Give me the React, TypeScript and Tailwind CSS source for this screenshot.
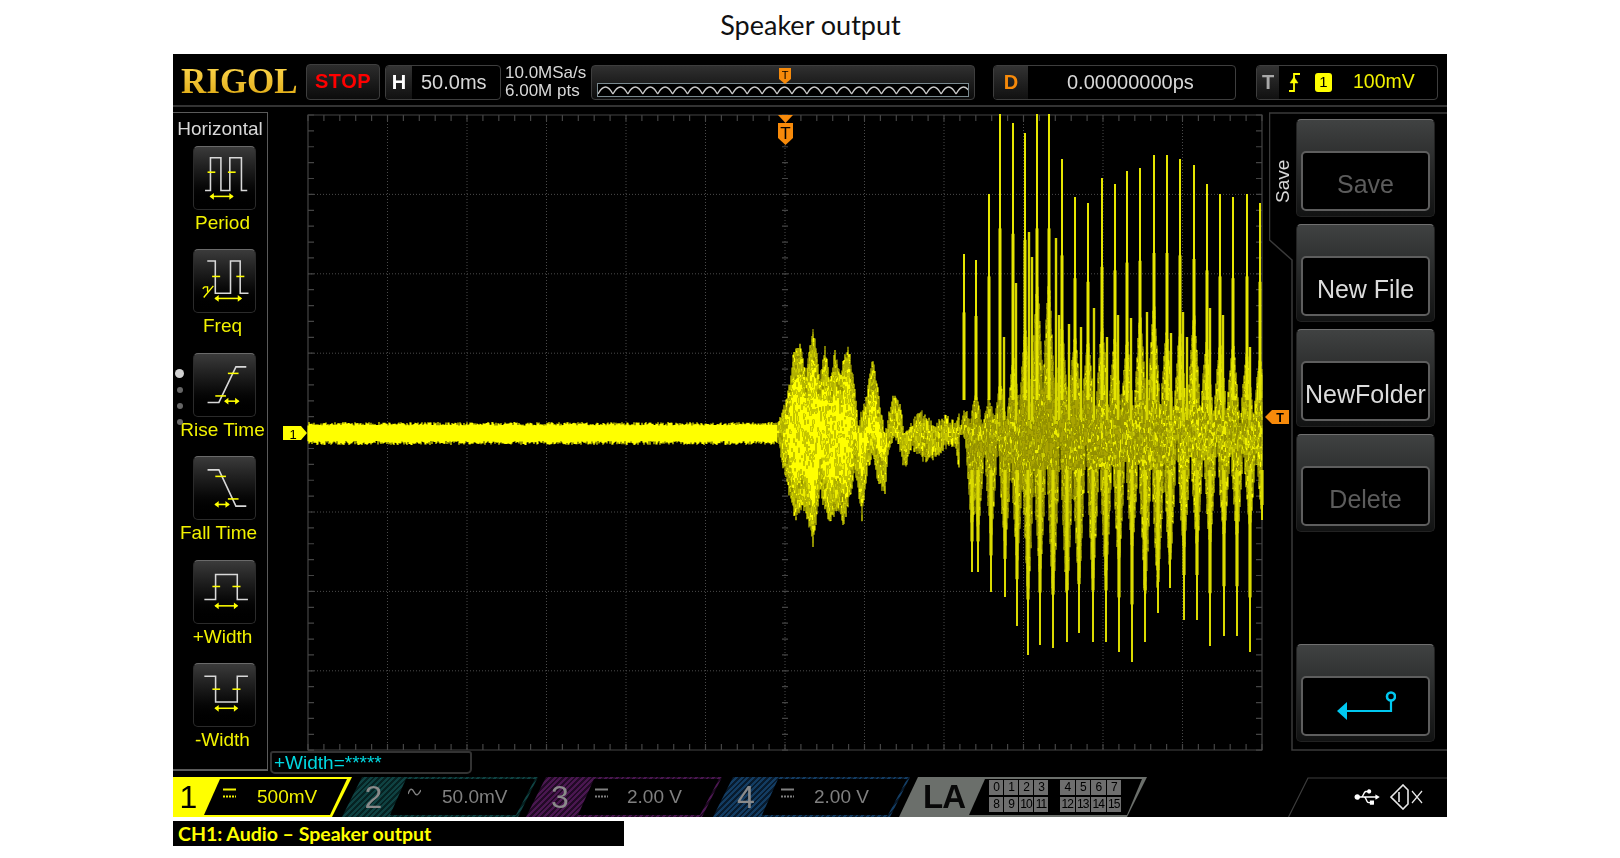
import React, { useMemo } from "react";
import { FaUsb } from "react-icons/fa";

type Pt = [number, number];

const rng = (seed: number) => () => {
  seed = (seed + 0x6d2b79f5) | 0;
  let t = Math.imul(seed ^ (seed >>> 15), 1 | seed);
  t = (t + Math.imul(t ^ (t >>> 7), 61 | t)) ^ t;
  return ((t ^ (t >>> 14)) >>> 0) / 4294967296;
};

const interp = (pts: Pt[], x: number) => {
  for (let i = 1; i < pts.length; i++) {
    if (x <= pts[i][0]) {
      const [x0, y0] = pts[i - 1];
      const [x1, y1] = pts[i];
      return y0 + ((y1 - y0) * (x - x0)) / (x1 - x0);
    }
  }
  return pts[pts.length - 1][1];
};

// envelopes read off the trace, in page pixels
const burstTop: Pt[] = [[778, 421], [785, 400], [790, 380], [793, 350], [800, 338], [806, 372], [813, 322], [820, 375], [825, 345], [830, 375], [835, 350], [840, 370], [848, 342], [855, 382], [858, 420], [865, 400], [873, 355], [880, 400], [885, 430], [893, 392], [900, 402], [905, 432], [912, 420], [920, 405], [927, 416], [935, 420], [945, 414], [955, 420], [960, 412]];
const burstBot: Pt[] = [[778, 445], [785, 480], [790, 500], [795, 522], [805, 510], [813, 548], [820, 495], [825, 512], [830, 525], [840, 510], [843, 530], [850, 500], [855, 475], [860, 505], [862, 523], [868, 470], [873, 460], [877, 480], [885, 500], [888, 460], [895, 440], [905, 472], [912, 450], [925, 465], [935, 460], [945, 450], [955, 448], [960, 478]];
const bodyTop: Pt[] = [[960, 420], [972, 385], [990, 395], [1005, 370], [1020, 335], [1035, 280], [1042, 250], [1050, 270], [1060, 315], [1075, 325], [1090, 330], [1105, 310], [1118, 335], [1130, 330], [1142, 300], [1155, 290], [1168, 325], [1180, 320], [1195, 300], [1210, 340], [1225, 330], [1235, 335], [1250, 345], [1263, 350]];
const bodyBot: Pt[] = [[960, 490], [970, 537], [990, 547], [1005, 560], [1020, 580], [1030, 617], [1040, 587], [1055, 613], [1070, 613], [1080, 600], [1095, 597], [1107, 593], [1120, 577], [1133, 560], [1146, 617], [1158, 607], [1170, 580], [1185, 563], [1197, 560], [1210, 557], [1224, 550], [1237, 550], [1250, 537], [1262, 520]];
const upSpikes: Pt[] = [[964, 254], [976, 260], [989, 194], [1000, 114], [1013, 123], [1025, 133], [1037, 114], [1049, 114], [1062, 159], [1075, 197], [1088, 203], [1102, 178], [1115, 184], [1127, 171], [1140, 168], [1154, 155], [1167, 155], [1180, 159], [1194, 165], [1207, 184], [1220, 194], [1233, 197], [1247, 194], [1260, 203]];
const upMinor: Pt[] = [[1004, 337], [1016, 283], [1029, 232], [1032, 257], [1056, 238], [1059, 315], [1069, 324], [1081, 327], [1094, 308], [1107, 337], [1118, 315], [1131, 318], [1147, 312], [1171, 333], [1183, 312], [1187, 337], [1210, 308], [1223, 315], [1250, 347]];
const downSpikes: Pt[] = [[972, 572], [978, 572], [991, 592], [1005, 597], [1017, 626], [1028, 655], [1040, 645], [1053, 648], [1067, 642], [1079, 633], [1093, 642], [1106, 642], [1119, 652], [1132, 662], [1145, 642], [1158, 613], [1170, 588], [1184, 620], [1197, 620], [1210, 646], [1224, 636], [1237, 636], [1250, 652], [1262, 520]];

const SHADES = ["#ffff00", "#eded00", "#cfcf00", "#a9a400"];

function buildTrace() {
  const r = rng(7);
  const d = ["", "", "", ""];
  const seg = (x: number, a: number, b: number, mix: number) => {
    let y = a;
    while (y < b) {
      const len = 2 + r() * 4;
      const v = r() + mix;
      const i = v < 0.45 ? 0 : v < 0.8 ? 1 : v < 1.1 ? 2 : 3;
      d[i] += `M${x} ${y.toFixed(1)}V${Math.min(b, y + len).toFixed(1)}`;
      y += len;
    }
  };

  // flat noise band before the trigger
  for (let x = 308; x < 778; x++) {
    d[0] += `M${x} ${(433 - 7.5 - r() * 3.5).toFixed(1)}V${(433 + 8 + r() * 4).toFixed(1)}`;
  }

  // first burst
  for (let x = 778; x < 960; x++) {
    const t = interp(burstTop, x) + r() * 9;
    const b = interp(burstBot, x) - r() * 9;
    seg(x, t, Math.min(433, t + 30), 0.18);
    seg(x, Math.min(433, t + 30), Math.max(433, b - 30), -0.3);
    seg(x, Math.max(433, b - 30), b, 0.18);
  }

  // second burst, lobes sit on the spikes
  const nearest = (list: Pt[], x: number) =>
    list.reduce((m, p) => Math.min(m, Math.abs(p[0] - x)), 99);
  for (let x = 960; x < 1263; x++) {
    const up = Math.max(0, 1 - nearest(upSpikes, x) / 6.6);
    const dn = Math.max(0, 1 - nearest(downSpikes, x) / 6.6);
    const cT = interp(bodyTop, x);
    const cB = interp(bodyBot, x);
    const t = 432 - (432 - cT) * (0.12 + 0.88 * up ** 0.8) + r() * 5;
    const b = 432 + (cB - 432) * (0.1 + 0.9 * dn ** 0.8) - r() * 5;
    const dark = 0.62 - Math.min(0.35, Math.abs(x - 1045) / 400);
    seg(x, t, b, dark);
  }
  return d;
}

const GRID_X = Array.from({ length: 13 }, (_, i) => 308 + i * 79.5);
const GRID_Y = Array.from({ length: 9 }, (_, i) => 115 + i * 79.4);
const TICKS_X = Array.from({ length: 61 }, (_, i) => 308 + i * 15.9);
const TICKS_Y = Array.from({ length: 41 }, (_, i) => 115 + i * 15.88);

function Scope() {
  const trace = useMemo(buildTrace, []);
  return (
    <svg
      viewBox="268 107 1001 644"
      className="block h-[644px] w-[1001px] overflow-visible"
    >
      <g stroke="#4a4a4a" strokeWidth="1" strokeDasharray="1 2">
        {GRID_X.slice(1, 12).map((x) => (
          <line key={x} x1={x} x2={x} y1={115} y2={750} />
        ))}
        {GRID_Y.slice(1, 8).map((y) => (
          <line key={y} x1={308} x2={1262} y1={y} y2={y} />
        ))}
      </g>
      <g stroke="#444" strokeWidth="1.2">
        <path d="M308 115H1262V750H308Z" fill="none" />
        {TICKS_X.map((x) => (
          <path key={x} d={`M${x} 115v6M${x} 750v-6M${x} 429v6`} />
        ))}
        {TICKS_Y.map((y) => (
          <path key={y} d={`M308 ${y}h6M1262 ${y}h-6M782 ${y}h6`} />
        ))}
      </g>

      <g className="blur-[0.4px]" fill="none" strokeWidth="1.15">
        {trace.map((d, i) => (
          <path key={i} d={d} stroke={SHADES[i]} />
        ))}
        {upSpikes.map(([x, y]) => (
          <g key={x} stroke="#e6e600">
            <line x1={x} x2={x} y1={y} y2={400} strokeWidth="2" />
            <line x1={x} x2={x} y1={y + (400 - y) * 0.4} y2={400} strokeWidth="3" />
          </g>
        ))}
        {upMinor.map(([x, y]) => (
          <line key={x} x1={x} x2={x} y1={y} y2={420} stroke="#d8d800" strokeWidth="2.4" />
        ))}
        {downSpikes.map(([x, y]) => (
          <g key={x} stroke="#dada00">
            <line x1={x} x2={x} y1={470} y2={y} strokeWidth="2" />
            <line x1={x} x2={x} y1={470} y2={470 + (y - 470) * 0.7} strokeWidth="3.2" />
          </g>
        ))}
      </g>

      {/* ch1 ground marker */}
      <path d="M283 426H301L307 433L301 440H283Z" fill="#ffff00" />
      <text x="293" y="438.5" fontSize="13" textAnchor="middle" fill="#000">1</text>

      {/* trigger position */}
      <path d="M778 115H793L785.5 123Z" fill="#f78a0a" />
      <path d="M778 123H793V138L785.5 145L778 138Z" fill="#f78a0a" />
      <text x="785.5" y="139" fontSize="17" textAnchor="middle" fill="#000">T</text>

      {/* trigger level */}
      <path d="M1265 417L1272 410H1289V424H1272Z" fill="#f78a0a" />
      <text x="1280" y="422" fontSize="12.5" fontWeight="700" textAnchor="middle" fill="#000">T</text>
    </svg>
  );
}

type Measure = {
  label: string;
  path: string;
  ticks: number[][];
  arrow: number[];
  frac?: boolean;
  shift: string;
};

const MEASURES: Measure[] = [
  { label: "Period", path: "M11.4 45H17V11H27.8V45H37V11H49V45H55", ticks: [[14, 22, 26], [35, 43, 26]], arrow: [17, 40, 51], shift: "ml-[5px]" },
  { label: "Freq", path: "M13.7 11.3H22V44.7H37.7V11.3H47.7V44.7H56.3", ticks: [[18.7, 27, 27.3], [43.7, 52, 27.3]], arrow: [22, 48.7, 50], frac: true, shift: "ml-[5px]" },
  { label: "Rise Time", path: "M14 50H25.7L43.3 13.3H54", ticks: [[35, 46, 20], [22, 33, 43.3]], arrow: [32, 46, 48.7], shift: "ml-[5px]" },
  { label: "Fall Time", path: "M14 13.3H25.7L43.3 50.7H54", ticks: [[22, 33, 20], [35, 46, 43.3]], arrow: [22, 36, 49], shift: "ml-[-3px]" },
  { label: "+Width", path: "M10.7 39.7H22.3V14H44.7V39.7H55.7", ticks: [[19, 27, 26.3], [39.7, 48, 26.3]], arrow: [22, 44.7, 46.3], shift: "ml-[5px]" },
  { label: "-Width", path: "M10.7 12.7H22.3V39.3H44.7V12.7H55.7", ticks: [[19, 27, 26], [39.7, 48, 26]], arrow: [22, 44.7, 45.7], shift: "ml-[5px]" },
];

function MeasureKey({ m }: { m: Measure }) {
  const [a, b, y] = m.arrow;
  return (
    <div className="flex h-[103.4px] w-[94px] flex-col items-center">
      <div className="ml-2 h-[64px] w-[63px] shrink-0 rounded-[5px] border border-[#2b2b2b] border-t-[#6a6a6a] bg-gradient-to-b from-[#3b3b3b] via-[#121212] to-black">
        <svg viewBox="0 0 63 64" className="h-full w-full" fill="none">
          <path d={m.path} stroke="#d8d8d8" strokeWidth="1.6" />
          {m.ticks.map(([x1, x2, ty]) => (
            <line key={x1} x1={x1} x2={x2} y1={ty} y2={ty} stroke="#ffff00" strokeWidth="1.6" />
          ))}
          <line x1={a} x2={b} y1={y} y2={y} stroke="#ffff00" strokeWidth="1.6" />
          <path d={`M${a - 1} ${y}l4.5 -3.5v7ZM${b + 1} ${y}l-4.5 -3.5v7Z`} fill="#ffff00" />
          {m.frac && <path d="M10 49L20 37M11 38h3v5M9 40l2 -2" stroke="#ffff00" strokeWidth="1.4" />}
        </svg>
      </div>
      <span className={`${m.shift} mt-[1px] whitespace-nowrap text-[19px] leading-[23px] text-[#f2f200]`}>
        {m.label}
      </span>
    </div>
  );
}

function SoftKey({ dim, children }: { dim?: boolean; children?: React.ReactNode }) {
  return (
    <div className="h-[98px] rounded-[5px] border border-[#222] border-t-[#707070] bg-gradient-to-b from-[#404242] to-[#121313] pb-[5px] pl-[4px] pr-[4px] pt-[31px]">
      <div
        className={`flex h-[60px] items-center justify-center overflow-hidden whitespace-nowrap rounded-[5px] border-2 border-[#5e5e5e] bg-black pt-[8px] text-[25px] ${
          dim ? "text-[#5c5c5c]" : "text-[#dcdcdc]"
        }`}
      >
        {children}
      </div>
    </div>
  );
}

function DcIcon({ color, sine }: { color: string; sine?: boolean }) {
  return (
    <svg viewBox="0 0 13 10" className="mb-[8px] h-[10px] w-[13px] shrink-0" fill="none" stroke={color}>
      {sine ? (
        <path d="M0 6C2 0 4 0 6 4S10 8 13 2" strokeWidth="1.5" />
      ) : (
        <>
          <path d="M0 1.5H13" strokeWidth="2" />
          <path d="M0 8.5H13" strokeWidth="2" strokeDasharray="2 1" />
        </>
      )}
    </svg>
  );
}

const memWave = Array.from({ length: 25 }, (_, i) => `M${i * 15} 10Q${i * 15 + 7.5} -4 ${(i + 1) * 15} 10`).join("");

export default function App() {
  return (
    <div className="h-[858px] w-[1620px] overflow-hidden bg-white font-['Liberation_Sans',sans-serif]">
      <div className="flex h-[54px] items-center justify-center pb-[4px] pl-[1px] font-['Lato',sans-serif] text-[27px] text-[#111]">
        Speaker output
      </div>

      <div className="ml-[173px] flex h-[763px] w-[1274px] flex-col bg-black [filter:blur(0.45px)]">
        {/* top status bar */}
        <div className="flex h-[53px] shrink-0 items-center border-b-2 border-[#333] pt-[5px]">
          <span className="ml-2 w-[118px] whitespace-nowrap bg-gradient-to-b from-[#ffd94d] to-[#dca600] bg-clip-text font-['Liberation_Serif',serif] text-[35px] font-bold leading-[36px] text-transparent">
            RIGOL
          </span>
          <div className="ml-[7px] flex h-[36px] w-[74px] items-center justify-center rounded-[4px] border border-[#3e3e3e] bg-gradient-to-b from-[#2c2c2c] to-[#0c0c0c] pb-[3px] text-[20px] font-bold tracking-[0.5px] text-[#ff0000]">
            STOP
          </div>
          <div className="ml-[5px] flex h-[35px] w-[116px] items-stretch overflow-hidden rounded-[4px] border border-[#3e3e3e]">
            <span className="flex w-[26px] items-center justify-center bg-gradient-to-b from-[#333] to-[#111] text-[20px] font-bold text-white">
              H
            </span>
            <span className="flex flex-1 items-center pl-[9px] text-[20px] text-[#d8d8d8]">50.0ms</span>
          </div>
          <div className="ml-1 w-[82px] whitespace-nowrap text-[17px] leading-[18px] text-[#d8d8d8]">
            10.0MSa/s
            <br />
            6.00M pts
          </div>
          <div className="relative ml-1 flex h-[35px] w-[384px] flex-col justify-end rounded-[4px] border border-[#3e3e3e] bg-gradient-to-b from-[#303030] to-[#0c0c0c] px-[5px] pb-[2px]">
            <div className="h-[14px] overflow-hidden border border-[#7a8a90] bg-black">
              <svg viewBox="0 0 372 12" preserveAspectRatio="none" className="block h-full w-full" fill="none">
                <path d={memWave} stroke="#c8c8c8" strokeWidth="1.3" />
              </svg>
            </div>
            <svg viewBox="0 0 12 16" className="absolute left-[187px] top-[2px] h-[16px] w-[12px]">
              <path d="M0 0H12V11L6 16L0 11Z" fill="#f78a0a" />
              <text x="6" y="10.5" fontSize="11" textAnchor="middle" fill="#000">T</text>
            </svg>
          </div>
          <div className="ml-[18px] flex h-[35px] w-[243px] items-stretch overflow-hidden rounded-[4px] border border-[#3e3e3e]">
            <span className="flex w-[34px] items-center justify-center bg-gradient-to-b from-[#333] to-[#111] text-[20px] font-bold text-[#f78a0a]">
              D
            </span>
            <span className="flex flex-1 items-center pl-[39px] text-[20px] text-[#d8d8d8]">0.00000000ps</span>
          </div>
          <div className="ml-5 flex h-[35px] w-[182px] items-center overflow-hidden rounded-[4px] border border-[#3e3e3e]">
            <span className="flex h-full w-[22px] items-center justify-center bg-gradient-to-b from-[#333] to-[#111] text-[20px] font-bold text-[#a8a8a8]">
              T
            </span>
            <svg viewBox="0 0 11 19" className="ml-[10px] h-[19px] w-[11px]" fill="none" stroke="#ffff00" strokeWidth="1.8">
              <path d="M0 18H5V1H11" />
              <path d="M1 10H9L5 4Z" fill="#ffff00" strokeWidth="0.5" />
            </svg>
            <span className="ml-[15px] flex h-[19px] w-[17px] items-center justify-center rounded-[3px] bg-[#ffff00] text-[15px] text-black">
              1
            </span>
            <span className="ml-[21px] text-[19.5px] text-[#f2f200]">100mV</span>
          </div>
        </div>

        {/* middle: measure keys, screen, softkeys */}
        <div className="flex h-[670px] shrink-0">
          <div className="relative mt-[5px] h-[659px] w-[95px] shrink-0 border-r border-t border-[#5a5a5a] border-b-2">
            <div className="flex h-[33px] items-center justify-center text-[19px] text-[#d8d8d8]">Horizontal</div>
            {MEASURES.map((m) => (
              <MeasureKey key={m.label} m={m} />
            ))}
            <div className="absolute left-[2px] top-[256px] flex w-[9px] flex-col items-center gap-[10px]">
              <span className="mb-[-1px] h-[9px] w-[9px] rounded-full bg-[#d0d0d0]" />
              <span className="h-[6px] w-[6px] rounded-full bg-[#666]" />
              <span className="h-[6px] w-[6px] rounded-full bg-[#666]" />
              <span className="h-[6px] w-[6px] rounded-full bg-[#666]" />
            </div>
          </div>

          <div className="w-[1001px] shrink-0">
            <Scope />
            <div className="ml-[2px] flex h-[23px] w-[202px] items-center rounded-b-[5px] rounded-t-[3px] border-2 border-[#333] pl-[2px] text-[19px] leading-none text-[#00d8e0]">
              +Width=*****
            </div>
          </div>

          <div className="relative flex w-[178px] shrink-0">
            <svg viewBox="0 0 178 650" className="absolute left-0 top-0 h-[650px] w-[178px]" fill="none">
              <path d="M178 6H0.5V133L23 153V643H178" stroke="#3a3a3a" strokeWidth="1.5" />
            </svg>
            <div className="ml-[5px] mt-[50px] h-[46px] w-[22px] rotate-180 text-[19px] leading-[18px] text-[#d8d8d8] [writing-mode:vertical-rl]">
              Save
            </div>
            <div className="relative ml-0 mt-[12px] grid w-[139px] grid-rows-[repeat(6,98px)] gap-y-[7px]">
              <SoftKey dim>Save</SoftKey>
              <SoftKey>New File</SoftKey>
              <SoftKey>NewFolder</SoftKey>
              <SoftKey dim>Delete</SoftKey>
              <div />
              <SoftKey>
                <svg viewBox="0 0 60 30" className="mb-[8px] h-[30px] w-[60px]" fill="none">
                  <path d="M1 24L11 15V33Z" fill="#00c8f0" transform="translate(0 -4)" />
                  <path d="M9 20H55V10" stroke="#00c8f0" strokeWidth="2.2" />
                  <circle cx="55" cy="5.5" r="4" stroke="#00c8f0" strokeWidth="2.6" />
                </svg>
              </SoftKey>
            </div>
          </div>
        </div>

        {/* bottom channel bar */}
        <div className="flex h-[40px] shrink-0 items-stretch text-[19px]">
          <div className="flex h-[40px] w-[179px] items-stretch bg-[#ffff00] py-[2px] pr-[5px] [clip-path:polygon(0_0,100%_0,calc(100%-20px)_100%,0_100%)]">
            <span className="w-[31px] text-center text-[32px] leading-[36px] text-black">1</span>
            <div className="flex flex-1 items-center gap-[21px] bg-black pl-[19px] text-[#f2f200] [clip-path:polygon(16px_0,100%_0,calc(100%-17px)_100%,0_100%)]">
              <DcIcon color="#f2f200" />
              500mV
            </div>
          </div>

          <div className="ml-[-10px] flex h-[40px] w-[196px] items-stretch bg-[repeating-linear-gradient(135deg,#0f4242_0,#0f4242_2px,#062222_2px,#062222_4px)] py-[2px] pr-[3px] [clip-path:polygon(20px_0,100%_0,calc(100%-20px)_100%,0_100%)]">
            <span className="w-[48px] pl-[15px] text-center text-[32px] leading-[36px] text-[#8a8a8a]">2</span>
            <div className="flex flex-1 items-center gap-[21px] bg-black pl-[18px] text-[#808080] [clip-path:polygon(16px_0,100%_0,calc(100%-19px)_100%,0_100%)]">
              <DcIcon color="#808080" sine />
              50.0mV
            </div>
          </div>

          <div className="ml-[-12px] flex h-[40px] w-[196px] items-stretch bg-[repeating-linear-gradient(135deg,#4a1750_0,#4a1750_2px,#220a26_2px,#220a26_4px)] py-[2px] pr-[3px] [clip-path:polygon(20px_0,100%_0,calc(100%-20px)_100%,0_100%)]">
            <span className="w-[52px] pl-[16px] text-center text-[32px] leading-[36px] text-[#8a8a8a]">3</span>
            <div className="flex flex-1 items-center gap-[19px] bg-black pl-[17px] text-[#808080] [clip-path:polygon(16px_0,100%_0,calc(100%-19px)_100%,0_100%)]">
              <DcIcon color="#808080" />
              2.00 V
            </div>
          </div>

          <div className="ml-[-9px] flex h-[40px] w-[197px] items-stretch bg-[repeating-linear-gradient(135deg,#133c62_0,#133c62_2px,#081b2e_2px,#081b2e_4px)] py-[2px] pr-[3px] [clip-path:polygon(20px_0,100%_0,calc(100%-20px)_100%,0_100%)]">
            <span className="w-[49px] pl-[17px] text-center text-[32px] leading-[36px] text-[#8a8a8a]">4</span>
            <div className="flex flex-1 items-center gap-[20px] bg-black pl-[19px] text-[#808080] [clip-path:polygon(16px_0,100%_0,calc(100%-19px)_100%,0_100%)]">
              <DcIcon color="#808080" />
              2.00 V
            </div>
          </div>

          <div className="ml-[-11px] flex h-[40px] w-[248px] items-stretch bg-[#6b6f6b] py-[2px] pr-[5px] [clip-path:polygon(19px_0,100%_0,calc(100%-20px)_100%,0_100%)]">
            <span className="w-[70px] pl-[24px] text-[33px] font-bold leading-[36px] tracking-[-1px] text-[#080808]">LA</span>
            <div className="flex flex-1 gap-[12px] bg-black pl-[20px] pt-[1px] [clip-path:polygon(16px_0,100%_0,calc(100%-15px)_100%,0_100%)]">
              <div className="grid h-[32px] grid-cols-[repeat(4,14px)] grid-rows-2 gap-[1px] gap-y-[2px] text-center text-[12px] leading-[15px] text-black">
                {["0", "1", "2", "3", "8", "9", "10", "11"].map((n) => (
                  <span key={n} className="bg-[#6e6e6e] tracking-[-1px]">{n}</span>
                ))}
              </div>
              <div className="grid h-[32px] grid-cols-[repeat(4,14.5px)] grid-rows-2 gap-[1px] gap-y-[2px] text-center text-[12px] leading-[15px] text-black">
                {["4", "5", "6", "7", "12", "13", "14", "15"].map((n) => (
                  <span key={n} className="bg-[#6e6e6e] tracking-[-1px]">{n}</span>
                ))}
              </div>
            </div>
          </div>

          <div className="relative ml-[141px] flex w-[159px] items-center pl-[63px]">
            <svg viewBox="0 0 159 40" className="absolute left-0 top-0 h-[40px] w-[159px]" fill="none">
              <path d="M0.5 40L20 1H159" stroke="#3c3c3c" strokeWidth="1.2" />
            </svg>
            <FaUsb className="h-[20px] w-[32px] text-white" />
            <svg viewBox="0 0 33 26" className="ml-[7px] h-[26px] w-[33px]" fill="none" stroke="#e8e8e8" strokeWidth="1.6">
              <path d="M1 13L13 1L18 6V20L13 25Z" />
              <path d="M9 8V18" />
              <path d="M22 7L32 19M32 7L22 19" strokeWidth="1.2" />
            </svg>
          </div>
        </div>
      </div>

      <div className="ml-[173px] mt-1 flex h-[25px] w-[451px] items-center bg-black pl-[5px] font-['Lato',sans-serif] text-[19.5px] font-bold text-[#ffff00]">
        CH1: Audio – Speaker output
      </div>
    </div>
  );
}
